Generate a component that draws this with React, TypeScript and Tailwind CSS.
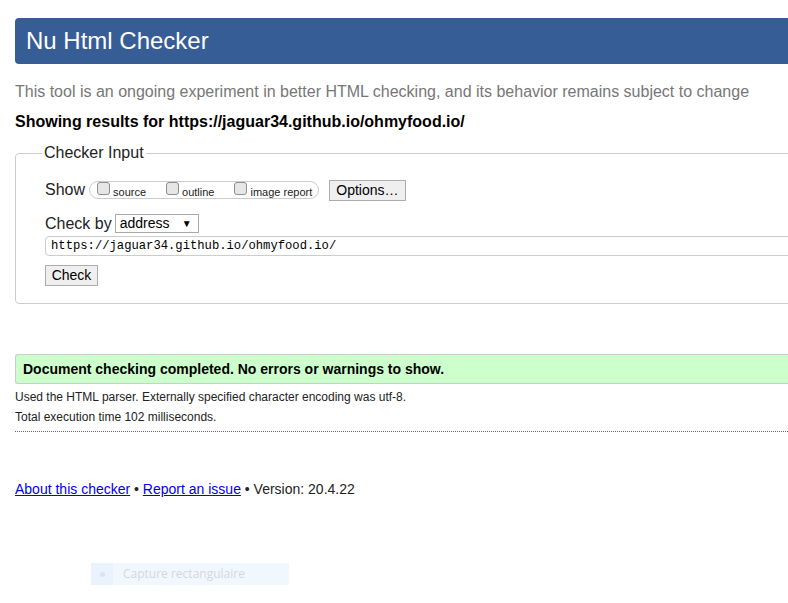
import React from 'react';

const Box: React.FC<{ label: string; className?: string }> = ({ label, className }) => (
    <span className={`flex items-center ${className ?? ''}`}>
        <span className="w-[13px] h-[13px] rounded-[3px] border border-[#8e8e8e] bg-[#e6e6e6] -mt-[3px]" />
        <span className="ml-[3px] text-[11px] leading-[14px] mt-[3px]">{label}</span>
    </span>
);

const App: React.FC = () => {
    return (
        <div className="relative w-full min-h-[603px] overflow-hidden bg-white text-[#222] font-['Liberation_Sans',Arial,sans-serif]">
            <div className="w-[1100px] pl-[15px] pt-[18px]">
                {/* Header */}
                <div className="h-[46px] rounded-l-[4px] bg-[#365d95] px-[11px] flex items-center text-white text-[24px]">
                    Nu Html Checker
                </div>

                <p className="mt-[18px] text-[16px] leading-[20px] text-[#777]">
                    This tool is an ongoing experiment in better HTML checking, and its behavior remains subject to change
                </p>
                <p className="mt-[10px] text-[16px] leading-[20px] font-bold text-black">
                    Showing results for https://jaguar34.github.io/ohmyfood.io/
                </p>

                {/* Checker input */}
                <fieldset className="mt-[12px] border border-[#ccc] rounded-[4px] pb-[16px]">
                    <legend className="ml-[26px] px-[2px] text-[16px] leading-[18px] text-[#222]">Checker Input</legend>

                    <div className="pl-[29px]">
                        <div className="mt-[18px] h-[20px] flex items-center">
                            <span className="text-[16px]">Show</span>
                            <div className="ml-[4px] h-[18px] border border-[#ccc] rounded-[9px] pl-[7px] pr-[6px] flex items-center">
                                <Box label="source" />
                                <Box label="outline" className="ml-[20px]" />
                                <Box label="image report" className="ml-[20px]" />
                            </div>
                            <button className="ml-[10px] h-[21px] px-[6px] border border-[#adadad] bg-[#efefef] text-[14px] leading-[19px] text-black">
                                Options…
                            </button>
                        </div>

                        <div className="mt-[14px] h-[19px] flex items-center">
                            <span className="text-[16px]">Check by</span>
                            <div className="ml-[3px] w-[84px] h-[19px] border border-[#a9a9a9] bg-white flex items-center justify-between pl-[4px] pr-[6px] text-[14px] text-black">
                                <span>address</span>
                                <span className="text-[10px]">▼</span>
                            </div>
                        </div>

                        <div className="mt-[3px] h-[20px] border border-[#ccc] rounded-[4px] flex items-center pl-[5px] text-[12.2px] text-black font-['Liberation_Mono',monospace]">
                            https://jaguar34.github.io/ohmyfood.io/
                        </div>

                        <button className="mt-[9px] h-[21px] w-[53px] border border-[#adadad] bg-[#efefef] text-[14px] leading-[19px] text-black">
                            Check
                        </button>
                    </div>
                </fieldset>

                {/* Success message */}
                <div className="mt-[50px] h-[30px] border border-r-0 border-[#ccc] rounded-l-[3px] bg-[#ccffcc] flex items-center pl-[7px] text-[14px] font-bold text-black">
                    Document checking completed. No errors or warnings to show.
                </div>

                <div className="pb-[6px] border-b border-dotted border-[#666]">
                    <p className="mt-[5px] text-[12px] leading-[16px]">
                        Used the HTML parser. Externally specified character encoding was utf-8.
                    </p>
                    <p className="mt-[4px] text-[12px] leading-[16px]">Total execution time 102 milliseconds.</p>
                </div>

                <p className="mt-[49px] text-[14px] leading-[17px]">
                    <a href="#" className="text-[#0000ee] underline">About this checker</a>
                    {' • '}
                    <a href="#" className="text-[#0000ee] underline">Report an issue</a>
                    {' • Version: 20.4.22'}
                </p>
            </div>

            {/* Snipping tool hint */}
            <div className="absolute left-[91px] top-[563px] w-[198px] h-[22px] flex bg-[#f1f7fe]">
                <div className="w-[22px] h-full bg-[#eaf3fd] flex items-center justify-center">
                    <span className="w-[5px] h-[5px] rounded-full bg-[#dde3ea]" />
                </div>
                <span className="ml-[10px] text-[12px] leading-[22px] text-[#d4d8dc] font-['Open_Sans',sans-serif]">
                    Capture rectangulaire
                </span>
            </div>
        </div>
    );
};

export default App;
